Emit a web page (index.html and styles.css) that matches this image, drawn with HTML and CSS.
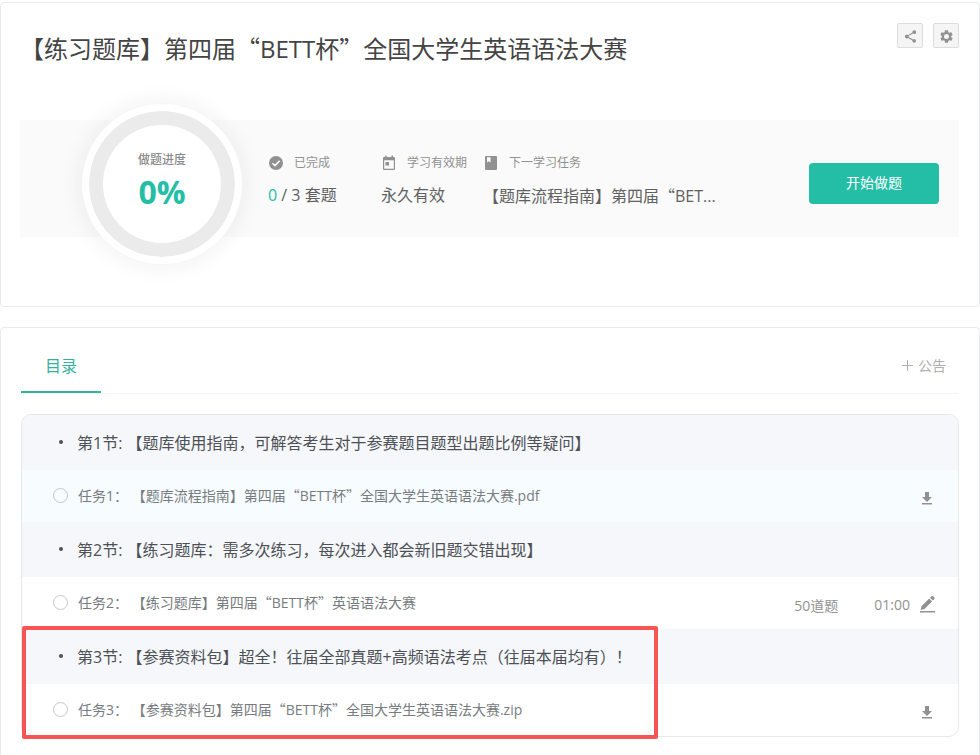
FILE: index.html
```html
<!DOCTYPE html>
<html lang="zh-CN">
<head>
    <meta charset="UTF-8">
    <meta name="viewport" content="width=device-width, initial-scale=1.0">
    <title>【练习题库】第四届“BETT杯”全国大学生英语语法大赛</title>
    <link rel="stylesheet" href="styles.css">
</head>
<body>
    <section class="card course">
        <header class="course-header">
            <h1>【练习题库】第四届<span class="quote">“</span>BETT杯<span class="quote">”</span>全国大学生英语语法大赛</h1>
            <div class="course-tools">
                <button type="button" class="tool-button" aria-label="分享">
                    <svg viewBox="0 0 24 24" width="15" height="15"><path d="M18 16.1c-.8 0-1.400.3-2 .8l-7.100-4.200c.1-.2.1-.500.1-.7s0-.5-.1-.7L16 7.200c.5.5 1.200.8 2 .8a3 3 0 1 0-3-3c0 .2 0 .5.1.7L8 9.800A3 3 0 1 0 8 14.200l7.100 4.200c-.1.2-.1.4-.1.600a2.900 2.900 0 1 0 3-2.900z"/></svg>
                </button>
                <button type="button" class="tool-button" aria-label="设置">
                    <svg viewBox="0 0 24 24" width="15" height="15"><path fill-rule="evenodd" d="M19.400 13c0-.3.1-.6.1-1s0-.7-.1-1l2.100-1.600c.2-.2.2-.4.1-.6l-2-3.500c-.1-.2-.4-.3-.6-.2l-2.500 1c-.5-.4-1.100-.7-1.700-1l-.4-2.600c0-.3-.2-.5-.5-.5h-4c-.3 0-.5.2-.5.4l-.4 2.700c-.6.2-1.100.6-1.700 1L5 5.100c-.2-.1-.5 0-.6.2l-2 3.500c-.1.2-.1.500.1.600L4.600 11c0 .3-.1.600-.1 1s0 .7.1 1l-2.100 1.600c-.2.2-.2.4-.1.600l2 3.500c.1.2.4.3.6.2l2.500-1c.5.4 1.100.7 1.700 1l.4 2.600c0 .3.2.5.5.5h4c.3 0 .5-.2.5-.4l.4-2.700c.6-.2 1.100-.6 1.700-1l2.500 1c.2.100.5 0 .6-.2l2-3.500c.1-.2.1-.5-.1-.6L19.400 13zM12 16a4 4 0 1 1 0-8 4 4 0 0 1 0 8z"/></svg>
                </button>
            </div>
        </header>

        <div class="summary">
            <div class="progress">
                <span class="progress-label">做题进度</span>
                <span class="progress-value">0%</span>
            </div>
            <dl class="stats">
                <div class="stat">
                    <dt>
                        <svg viewBox="0 0 16 16" width="16" height="16"><circle cx="8" cy="8" r="7"/><path class="check" d="M4.500 8.200l2.500 2.400 4.600-4.800"/></svg>
                        已完成
                    </dt>
                    <dd><span class="done">0</span> / 3 套题</dd>
                </div>
                <div class="stat">
                    <dt>
                        <svg viewBox="0 0 16 16" width="16" height="16"><path fill-rule="evenodd" d="M4 .5h1.500V2h5V.5H12V2h1a1 1 0 0 1 1 1v11a1 1 0 0 1-1 1H3a1 1 0 0 1-1-1V3a1 1 0 0 1 1-1h1zM3.200 5.200v8.600h9.600V5.200zM4.500 7h3.500v3.500H4.500z"/></svg>
                        学习有效期
                    </dt>
                    <dd>永久有效</dd>
                </div>
                <div class="stat">
                    <dt>
                        <svg viewBox="0 0 16 16" width="16" height="16"><path fill-rule="evenodd" d="M3 1h10a1 1 0 0 1 1 1v12a1 1 0 0 1-1 1H3a1 1 0 0 1-1-1V2a1 1 0 0 1 1-1zM4 2.200v5.300l1.800-1.300 1.800 1.300V2.200z"/></svg>
                        下一学习任务
                    </dt>
                    <dd>【题库流程指南】第四届<span class="quote">“</span>BET...</dd>
                </div>
            </dl>
            <button type="button" class="start-button">开始做题</button>
        </div>
    </section>

    <section class="card catalog">
        <nav class="tabs">
            <a href="#catalog" class="tab">目录</a>
            <button type="button" class="notice-button">
                <svg viewBox="0 0 12 12" width="12" height="12"><path d="M1 6.500h11M6.500 1v11"/></svg>
                公告
            </button>
        </nav>

        <div class="chapters" id="catalog">
            <section class="chapter">
                <h2>第1节: 【题库使用指南，可解答考生对于参赛题目题型出题比例等疑问】</h2>
                <div class="task task-active">
                    <span class="task-status"></span>
                    <a href="#task1">任务1： 【题库流程指南】第四届<span class="quote">“</span>BETT杯<span class="quote">”</span>全国大学生英语语法大赛.pdf</a>
                    <button type="button" class="task-icon" aria-label="下载">
                        <svg viewBox="0 0 18 18" width="18" height="18"><path d="M7 3h4v5h3l-5 5-5-5h3zM4 14h10v1.500H4z"/></svg>
                    </button>
                </div>
            </section>
            <section class="chapter">
                <h2>第2节: 【练习题库：需多次练习，每次进入都会新旧题交错出现】</h2>
                <div class="task">
                    <span class="task-status"></span>
                    <a href="#task2">任务2： 【练习题库】第四届<span class="quote">“</span>BETT杯<span class="quote">”</span>英语语法大赛</a>
                    <span class="task-count">50道题</span>
                    <span class="task-time">01:00</span>
                    <button type="button" class="task-icon" aria-label="做题">
                        <svg viewBox="0 0 18 18" width="18" height="18"><path d="M3.500 10.200l7.700-7.700 2.900 2.900-7.700 7.700-3.800.9zM12 1.700l1.100-1.100a1.700 1.700 0 0 1 2.400 0l.5.5a1.700 1.700 0 0 1 0 2.400l-1.100 1.100zM2 15h15v1.500H2z"/></svg>
                    </button>
                </div>
            </section>
            <section class="chapter chapter-marked">
                <h2>第3节: 【参赛资料包】超全！往届全部真题+高频语法考点（往届本届均有）！</h2>
                <div class="task">
                    <span class="task-status"></span>
                    <a href="#task3">任务3： 【参赛资料包】第四届<span class="quote">“</span>BETT杯<span class="quote">”</span>全国大学生英语语法大赛.zip</a>
                    <button type="button" class="task-icon" aria-label="下载">
                        <svg viewBox="0 0 18 18" width="18" height="18"><path d="M7 3h4v5h3l-5 5-5-5h3zM4 14h10v1.500H4z"/></svg>
                    </button>
                </div>
            </section>
        </div>
    </section>
</body>
</html>
```

FILE: styles.css
```css
*,
*::before,
*::after {
    box-sizing: border-box;
}

body {
    margin: 0;
    padding-top: 2px;
    background-color: #fff;
    color: #616161;
    font-family: "Open Sans", "Noto Sans CJK SC", sans-serif;
    font-size: 14px;
    text-spacing-trim: space-all;
}

h1, h2, dl, dd {
    margin: 0;
    font-weight: normal;
}

button {
    padding: 0;
    border: none;
    background: none;
    color: inherit;
    font: inherit;
    cursor: pointer;
}

a {
    color: inherit;
    text-decoration: none;
}

svg {
    display: block;
    flex: none;
    fill: #919191;
}

/* full-width quotation marks */
.quote {
    font-family: "Noto Sans CJK SC", sans-serif;
}

.card {
    padding: 20px 20px 0;
    border: 1px solid #e8ebeb;
    border-radius: 4px;
    background-color: #fff;
}

.course {
    margin-bottom: 20px;
    padding: 20px 20px 69px 19px;
}

.course-header {
    display: flex;
    justify-content: space-between;
    align-items: flex-start;
    margin-bottom: 53px;
}

.course-header h1 {
    padding-top: 7px;
    color: #444;
    font-size: 24px;
    line-height: 36px;
}

.course-tools {
    display: flex;
    gap: 10px;
}

.tool-button {
    display: flex;
    align-items: center;
    justify-content: center;
    width: 26px;
    height: 25px;
    padding-top: 2px;
    border: 1px solid #ddd;
    border-radius: 2px;
    background-color: #f5f5f5;
}

.summary {
    display: flex;
    align-items: center;
    height: 117px;
    padding: 10px 20px 0 62px;
    background-color: #fafafa;
}

.progress {
    display: flex;
    flex: none;
    flex-direction: column;
    align-items: center;
    justify-content: center;
    width: 160px;
    height: 160px;
    margin-right: 26px;
    border: 7px solid #fff;
    border-radius: 50%;
    background-color: #fff;
    box-shadow: inset 0 0 0 14px #ebebeb, 0 0 24px rgba(0, 40, 30, 0.08);
}

.progress-label {
    font-size: 12px;
    font-weight: 500;
    line-height: 20px;
    color: #8a8a8a;
}

.progress-value {
    margin-bottom: 4px;
    color: #24bea7;
    font-size: 32px;
    font-weight: bold;
    line-height: 44px;
}

.stats {
    display: grid;
    flex: 1;
    grid-template-columns: 113px 102px 1fr;
    padding-bottom: 7px;
}

.stat dt {
    display: flex;
    align-items: center;
    gap: 10px;
    margin-bottom: 10px;
    color: #919191;
    font-size: 12px;
    line-height: 20px;
}

.stat dd {
    font-size: 16px;
    line-height: 24px;
    white-space: nowrap;
}

.check {
    fill: none;
    stroke: #fff;
    stroke-width: 1.5;
}

.done {
    color: #24bea7;
}

.start-button {
    flex: none;
    width: 130px;
    height: 41px;
    padding-bottom: 3px;
    border-radius: 4px;
    background-color: #24bea7;
    color: #fff;
}

.catalog {
    padding-bottom: 40px;
}

.tabs {
    display: flex;
    justify-content: space-between;
    height: 46px;
    border-bottom: 1px solid #f2f2f2;
}

.tab {
    height: 45px;
    padding: 0 24px;
    border-bottom: 2px solid #34b39c;
    color: #34b39c;
    font-size: 16px;
    line-height: 36px;
}

.notice-button {
    display: flex;
    align-items: center;
    gap: 5px;
    height: 34px;
    margin-right: 13px;
    color: #b0b0b0;
}

.notice-button svg {
    stroke: #b0b0b0;
}

.chapters {
    margin-top: 20px;
    border: 1px solid #e6e8ea;
    border-radius: 10px;
}

.chapter h2 {
    display: flex;
    align-items: center;
    gap: 14px;
    height: 55px;
    padding: 0 0 2px 37px;
    background-color: #f5f7fb;
    color: #4d5156;
    font-size: 16px;
}

.chapter:first-child h2 {
    border-radius: 9px 9px 0 0;
}

.chapter h2::before {
    content: "";
    width: 4px;
    height: 4px;
    border-radius: 50%;
    background-color: #4d5156;
}

.task {
    display: flex;
    align-items: center;
    height: 52px;
    padding: 0 22px 2px 31px;
    color: #777c80;
}

.task-active {
    background-color: #f7fcff;
}

.task-status {
    width: 15px;
    height: 15px;
    margin-right: 10px;
    border: 1px solid #c5c8cc;
    border-radius: 50%;
}

.task a {
    flex: 1;
}

.task-count,
.task-time,
.task-icon {
    padding-top: 5px;
    color: #919191;
}

.task-count {
    margin-right: 36px;
}

.task-time {
    margin-right: 8px;
}

/* red frame over the chapter with the download pack */
.chapter-marked {
    position: relative;
}

.chapter-marked::after {
    content: "";
    position: absolute;
    top: -3px;
    bottom: -3px;
    left: 0;
    width: 68%;
    border: 4px solid #f75454;
    border-radius: 2px;
    pointer-events: none;
}
```
